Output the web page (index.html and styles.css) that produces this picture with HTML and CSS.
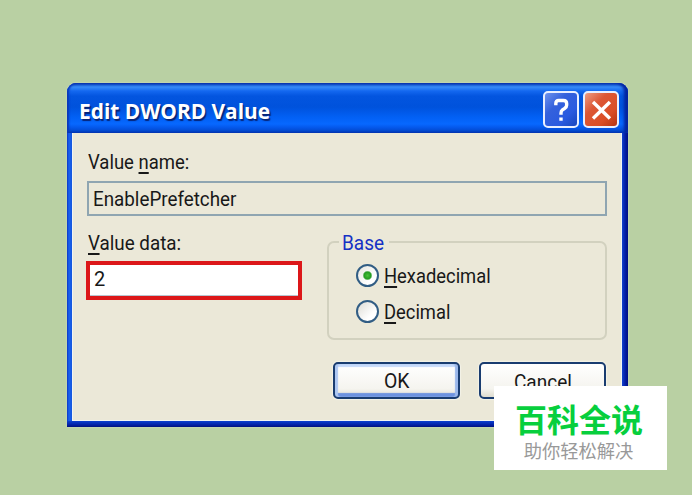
FILE: index.html
```
<!DOCTYPE html>
<html lang="en">
<head>
<meta charset="utf-8">
<title>Edit DWORD Value</title>
<link rel="stylesheet" href="styles.css">
</head>
<body>
<main class="dialog">
  <header class="titlebar">
    <h1 class="title">Edit DWORD Value</h1>
    <div class="controls">
      <button class="control help" aria-label="Help"><svg viewBox="0 0 34 34"><path d="M11.5 12.5V10.5Q11.5 7.5 14.5 7.5H19.5Q23 7.5 23 10.7V12.5Q23 14.4 21 15.7L18.5 17.5Q17 18.6 17 21V22.5M17 25.5V29"/></svg></button>
      <button class="control close" aria-label="Close"><svg viewBox="0 0 34 34"><path d="M8.5 9L26.5 26.5M26.5 9L8.5 26.5"/></svg></button>
    </div>
  </header>
  <section class="client">
    <label class="label"><span class="t-name">Value <u>n</u>ame:</span></label>
    <div class="readonly"><span class="t-pref">EnablePrefetcher</span></div>
    <div class="columns">
      <div class="data">
        <label class="label"><span class="t-data"><u>V</u>alue data:</span></label>
        <div class="input">2</div>
      </div>
      <div class="group">
        <div class="legend"><span class="t-base">Base</span></div>
        <div class="option"><i class="radio checked"></i><span class="t-hex"><u>H</u>exadecimal</span></div>
        <div class="option"><i class="radio"></i><span class="t-dec"><u>D</u>ecimal</span></div>
      </div>
    </div>
    <div class="actions">
      <button class="button default"><span class="t-ok">OK</span></button>
      <button class="button"><span class="t-cancel">Cancel</span></button>
    </div>
  </section>
</main>
<aside class="badge" lang="zh-CN">
  <div class="brand">百科全说</div>
  <div class="tagline">助你轻松解决</div>
</aside>
</body>
</html>
```
FILE: styles.css
```
* { box-sizing: border-box; }
body {
  margin: 0;
  height: 495px;
  padding: 83px 64px 0 67px;
  overflow: hidden;
  background: #b9d0a3;
  color: #181818;
  font: 20px/24px Roboto, "Liberation Sans", sans-serif;
}
button { font: inherit; color: inherit; padding: 0; margin: 0; }
u { text-decoration-thickness: 1.5px; text-underline-offset: 3px; text-decoration-skip-ink: none; }
.dialog {
  width: 561px;
  height: 344px;
  padding: 0 6px 6px 5px;
  border-radius: 9px 9px 0 0;
  background:
    linear-gradient(#0a3fd0, #0222a8 60%, #001080) bottom / 100% 6px no-repeat,
    linear-gradient(90deg, #0a35c4, #1762ee 2px, #1556de 5px, transparent 5px) left / 6px 100% no-repeat,
    linear-gradient(90deg, #1243cf, #0420a8 3px, #000f82) right / 6px 100% no-repeat,
    #0830c8;
  box-shadow: 0 0 2px #d4dfcb;
}
.titlebar {
  display: flex;
  justify-content: space-between;
  height: 50px;
  margin: 0 -6px 0 -5px;
  padding: 8px 9px 0 13px;
  border-radius: 9px 9px 0 0;
  background: linear-gradient(#0b3cae 0, #1c62d8 2px, #368af8 4px, #1468f0 8px, #0355df 13px, #0052dc 24px, #0260f4 34px, #0768ff 41px, #0456e8 45px, #0241bc 50px);
  box-shadow: inset 2px 0 2px #0a36b8, inset -4px 0 3px #0324a0;
}
.title {
  margin: 4px 0 0 -1px;
  color: #fff;
  font: bold 22px/30px "Open Sans", sans-serif;
  white-space: nowrap;
  transform-origin: left;
  transform: scaleX(.948);
  text-shadow: 1.5px 1.5px 1px #062477;
}
.controls { display: flex; gap: 4px; }
.control {
  width: 36px;
  height: 37px;
  border: 2px solid #e8efff;
  border-radius: 5px;
}
.control svg { display: block; width: 32px; height: 33px; fill: none; stroke: #fff; stroke-width: 3.6; }
.help { background: linear-gradient(135deg, #6c92ee, #3461dc 35%, #2a5be0 70%, #1746bd); }
.close { background: linear-gradient(135deg, #ee9c82, #dc5735 35%, #db4f27 70%, #b33413); }
.client {
  height: 288px;
  padding: 17px 13px 0 14px;
  border: 1px solid #f2f4f1;
  border-top: 0;
  background: #ebe8d8;
}
.client span { display: inline-block; white-space: nowrap; transform-origin: left; }
.client .t-name { transform: scaleX(.925); }
.client .t-pref { transform: translateX(-1px) scaleX(.94); }
.client .t-data { transform: scaleX(.94); }
.client .t-base { transform: scaleX(.95); }
.client .t-hex { transform: translateY(1px) scaleX(.918); }
.client .t-dec { transform: translateY(1px) scaleX(.918); }
.client .t-ok { transform: translateX(1px) scaleX(.97); }
.client .t-cancel { transform: translate(2px, 1px) scaleX(.95); }
.label { display: block; height: 24px; padding-left: 1px; }
.readonly {
  width: 520px;
  height: 35px;
  margin-top: 7px;
  padding: 4px 5px;
  border: 2px solid #8fa5b1;
}
.columns { display: flex; justify-content: space-between; width: 520px; margin-top: 15px; }
.input {
  width: 216px;
  height: 39px;
  margin: 6px 0 0 -1px;
  padding: 2px 4px;
  border: 4px solid #dc1719;
  background: #fff;
  box-shadow: inset 0 -1px #b8c5d0;
}
.group {
  width: 280px;
  height: 99px;
  margin-top: 10px;
  padding-left: 28px;
  border: 2px solid #d2d1bf;
  border-radius: 7px;
}
.legend {
  width: 50px;
  height: 24px;
  margin: -12px 0 8px -18px;
  padding-left: 3px;
  background: #ebe8d8;
  color: #1531c5;
}
.option { display: flex; align-items: center; height: 24px; margin-bottom: 12px; }
.radio {
  width: 23px;
  height: 23px;
  margin: 0 5px 0 -1px;
  border: 2px solid #315d84;
  border-radius: 50%;
  background: linear-gradient(135deg, #dddcd5, #fff 70%);
}
.checked { background: radial-gradient(circle, #48c137 0, #229b20 3.5px, transparent 5px), linear-gradient(135deg, #e6e6df, #fff 70%); }
.actions { display: flex; gap: 19px; margin: 22px 0 0 246px; }
.button {
  width: 127px;
  height: 37px;
  border: 2px solid #193c70;
  border-radius: 5px;
  background: linear-gradient(#fff, #f5f4ef 75%, #dfdccf);
  box-shadow: 0 0 1px 1px #f3f2e8;
}
.default { box-shadow: inset 3px 0 1px #adc7f2, inset -3px 0 1px #9bb8eb, inset 0 3px 1px #c5d9fa, inset 0 -4px 1px #6d92df, 0 0 1px 1px #f3f2e8; }
.badge {
  position: absolute;
  left: 494px;
  top: 386px;
  width: 173px;
  height: 84px;
  padding-top: 13px;
  background: #fff;
  text-align: center;
  font-family: "Noto Sans CJK SC", sans-serif;
}
.brand { color: #07cf3d; font-size: 32px; line-height: 38px; font-weight: bold; margin-left: -3px; }
.tagline { color: #999; font-size: 18.3px; line-height: 26px; margin-left: -4px; }
```
